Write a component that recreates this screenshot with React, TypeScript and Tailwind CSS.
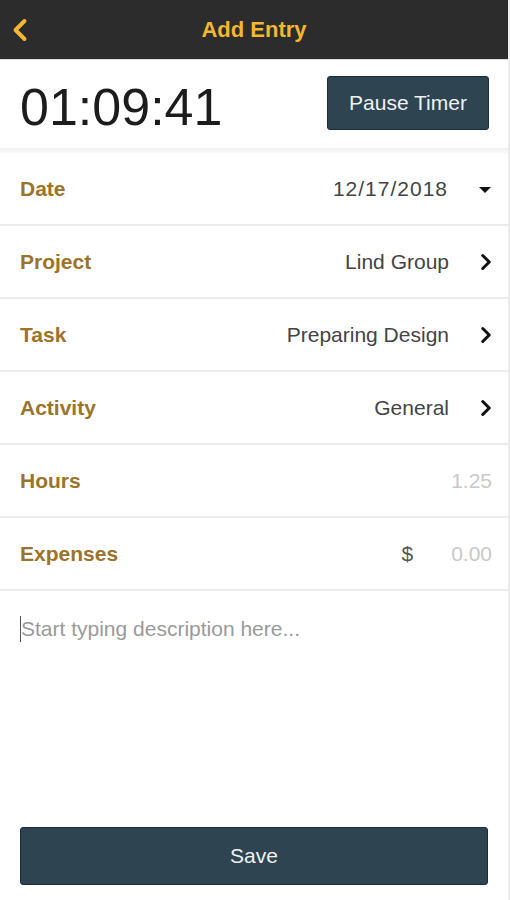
import { ChevronLeft, ChevronRight } from 'lucide-react';

const font = { fontFamily: '"Liberation Sans", Arial, sans-serif' };

type Row = { label: string; value?: string; kind: 'caret' | 'chevron' | 'plain' | 'money' };

const rows: Row[] = [
  { label: 'Date', value: '12/17/2018', kind: 'caret' },
  { label: 'Project', value: 'Lind Group', kind: 'chevron' },
  { label: 'Task', value: 'Preparing Design', kind: 'chevron' },
  { label: 'Activity', value: 'General', kind: 'chevron' },
  { label: 'Hours', value: '1.25', kind: 'plain' },
  { label: 'Expenses', value: '0.00', kind: 'money' },
];

export default function App() {
  return (
    <div className="w-[510px] h-[900px] bg-white flex flex-col border-r-2 border-[#ececec]" style={font}>
      {/* Header */}
      <div className="h-[60px] bg-[#2c2c2c] flex items-center relative shrink-0 border-b border-[#dcdcdc]">
        <ChevronLeft className="absolute left-[2px] top-[12px] text-[#f5b731]" size={36} strokeWidth={2.6} />
        <h1 className="w-full text-center text-[22px] font-bold text-[#f5b731]">Add Entry</h1>
      </div>

      {/* Timer */}
      <div className="h-[88px] flex items-center justify-between pl-[20px] pr-[19px] shrink-0">
        <span className="text-[52px] text-[#1c1c1c] leading-none pt-[6px]">01:09:41</span>
        <button className="w-[162px] h-[54px] mt-[-2px] rounded-[3px] bg-[#2e4450] border border-[#1c2e38] text-[21px] text-[#eef2f4]">
          Pause Timer
        </button>
      </div>
      <div className="h-[5px] bg-gradient-to-b from-[#efefef] to-[#fafafa] shrink-0" />

      {/* Form rows */}
      {rows.map(row => (
        <div key={row.label} className="h-[73px] flex items-center pl-[20px] pr-[16px] border-b-2 border-[#ececec] shrink-0">
          <span className="text-[21px] font-bold text-[#9c7329] flex-1">{row.label}</span>
          {row.kind === 'caret' && (
            <>
              <span className="text-[21px] text-[#444] tracking-[1px] mr-[30px]">{row.value}</span>
              <svg width="14" height="8" viewBox="0 0 14 8" className="mt-[2px]">
                <path d="M1 1h12L7 7z" fill="#111" />
              </svg>
            </>
          )}
          {row.kind === 'chevron' && (
            <>
              <span className="text-[21px] text-[#444] mr-[24px]">{row.value}</span>
              <ChevronRight className="text-[#111] mr-[-7px]" size={26} strokeWidth={2.8} />
            </>
          )}
          {row.kind === 'plain' && <span className="text-[21px] text-[#c8c8c8]">{row.value}</span>}
          {row.kind === 'money' && (
            <>
              <span className="text-[21px] text-[#555] mr-[38px]">$</span>
              <span className="text-[21px] text-[#c8c8c8]">{row.value}</span>
            </>
          )}
        </div>
      ))}

      {/* Description */}
      <div className="flex-1 pl-[20px] pt-[24px] flex items-start">
        <span className="w-px h-[26px] bg-[#555] mt-[1px]" />
        <span className="text-[21px] text-[#9a9a9a] leading-[28px]">Start typing description here...</span>
      </div>

      {/* Save */}
      <div className="px-[20px] pb-[15px] shrink-0">
        <button className="w-full h-[58px] rounded-[3px] bg-[#2e4450] border border-[#1c2e38] text-[21px] text-[#eef2f4]">
          Save
        </button>
      </div>
    </div>
  );
}
